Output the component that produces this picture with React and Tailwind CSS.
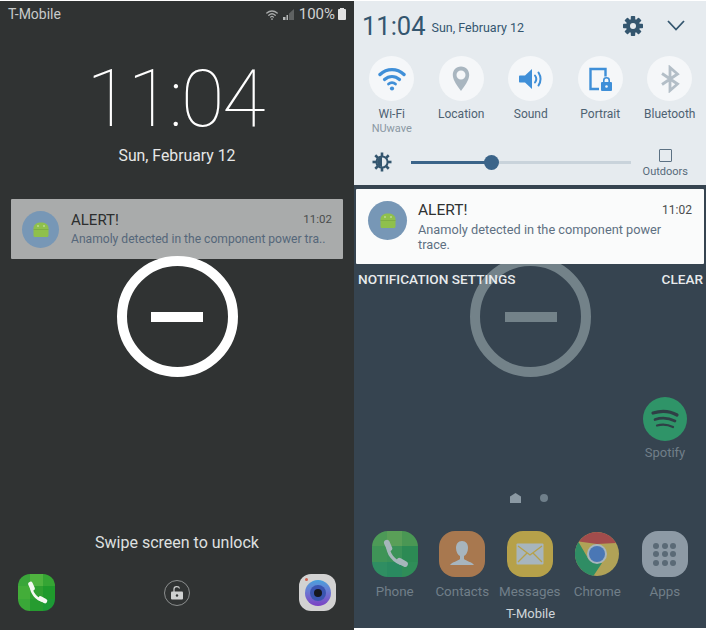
import React from 'react';

const WifiIcon = ({ size = 28, color = '#3f8fd8' }) => (
  <svg width={size} height={size} viewBox="0 0 28 28" fill="none">
    <path d="M2 9.5C9 3 19 3 26 9.5" stroke={color} strokeWidth="3.4" strokeLinecap="round" />
    <path d="M6.5 14.5C11 10.5 17 10.5 21.5 14.5" stroke={color} strokeWidth="3.2" strokeLinecap="round" />
    <path d="M10.5 19C12.5 17.2 15.5 17.2 17.5 19" stroke={color} strokeWidth="2.8" strokeLinecap="round" />
    <circle cx="14" cy="23.5" r="2.1" fill={color} />
  </svg>
);

const PinIcon = () => (
  <svg width="28" height="28" viewBox="0 0 28 28">
    <path fillRule="evenodd" d="M14 1.5C8.8 1.5 5.8 5.500 5.8 10c0 5.500 5.200 11.500 8.200 16 3-4.500 8.200-10.500 8.200-16 0-4.500-3-8.500-8.200-8.500zm0 4a4.500 4.500 0 1 1 0 9 4.500 4.500 0 0 1 0-9z" fill="#a9b6c0" />
  </svg>
);

const SoundIcon = () => (
  <svg width="28" height="28" viewBox="0 0 28 28" fill="none">
    <path d="M3 10.5H8L15 4V24L8 17.5H3C2.400 17.500 2 17 2 16.500V11.500C2 11 2.400 10.500 3 10.500Z" fill="#3f8fd8" />
    <path d="M18 10.5C19.500 12.500 19.500 15.500 18 17.500" stroke="#3f8fd8" strokeWidth="2" strokeLinecap="round" />
    <path d="M21.500 7.500C24 11.500 24 16.500 21.500 20.500" stroke="#3f8fd8" strokeWidth="2" strokeLinecap="round" />
  </svg>
);

const PortraitIcon = () => (
  <svg width="28" height="28" viewBox="0 0 28 28" fill="none">
    <path d="M13 24H4.500V4H19.500V11.500" stroke="#3f8fd8" strokeWidth="2.4" />
    <rect x="15" y="17" width="11" height="9" rx="1" fill="#3f8fd8" />
    <path d="M17.800 17V15.200C17.800 12 23.200 12 23.200 15.200V17" stroke="#3f8fd8" strokeWidth="1.6" />
    <circle cx="20.500" cy="21.500" r="1.300" fill="#f5f7f9" />
  </svg>
);

const BluetoothIcon = () => (
  <svg width="28" height="28" viewBox="0 0 28 28" fill="none" stroke="#b3bec7" strokeWidth="2.800">
    <path d="M6 8.500L21.500 19L14 25.500V2.500L21.500 9L6 19.500" />
  </svg>
);

const GearIcon = () => (
  <svg width="20" height="20" viewBox="0 0 20 20">
    {[0, 45, 90, 135].map((deg) => (
      <rect key={deg} x="7.8" y="0" width="4.4" height="20" rx="0.8" fill="#34566f" transform={`rotate(${deg} 10 10)`} />
    ))}
    <circle cx="10" cy="10" r="7" fill="#34566f" />
    <circle cx="10" cy="10" r="3" fill="#e6ebef" />
  </svg>
);

const BrightnessIcon = () => (
  <svg width="20" height="20" viewBox="0 0 20 20" fill="none">
    {[0, 45, 90, 135, 180, 225, 270, 315].map((deg) => (
      <path key={deg} d="M10 0.500V4.500" stroke="#34566f" strokeWidth="2.600" transform={`rotate(${deg} 10 10)`} />
    ))}
    <circle cx="10" cy="10" r="5.600" fill="#e6ebef" stroke="#34566f" strokeWidth="2" />
    <path d="M10 5A5 5 0 0 0 10 15Z" fill="#34566f" />
  </svg>
);

const AndroidAvatar = ({ className }) => (
  <div className={`rounded-full bg-[#7797b6] flex items-center justify-center shrink-0 ${className}`}>
    <svg width="16" height="15" viewBox="0 0 16 15">
      <path d="M0.500 6C0.500 2.500 4 0.500 8 0.500S15.500 2.500 15.500 6V13.500C15.500 14.300 14.800 15 14 15H2C1.200 15 0.500 14.300 0.500 13.500Z" fill="#8fc04c" />
      <rect x="0.500" y="7" width="15" height="1" fill="#7fae46" />
      <circle cx="5" cy="4" r="0.800" fill="#dce9c5" />
      <circle cx="11" cy="4" r="0.800" fill="#dce9c5" />
    </svg>
  </div>
);

const MinusRing = ({ ringClass, barClass }) => (
  <div className={`w-[121px] h-[121px] rounded-full border-[10px] flex items-center justify-center ${ringClass}`}>
    <div className={`w-[52px] h-[10px] ${barClass}`} />
  </div>
);

const QuickToggle = ({ label, sub, children }) => (
  <div className="w-[69.5px] flex flex-col items-center">
    <div className="w-[45px] h-[45px] rounded-full bg-[#f5f7f9] flex items-center justify-center">{children}</div>
    <span className="mt-[5px] text-[12px] leading-[16px] text-[#4e6272] whitespace-nowrap">{label}</span>
    {sub && <span className="text-[11px] leading-[14px] text-[#8a98a3]">{sub}</span>}
  </div>
);

const DockIcon = ({ label, children }) => (
  <div className="w-[67.5px] flex flex-col items-center">
    <div className="h-[46px] flex items-center justify-center">{children}</div>
    <span className="mt-[6px] text-[13.400px] leading-[18px] text-[#717f89] whitespace-nowrap">{label}</span>
  </div>
);

const PhoneGlyph = ({ color, size = 24 }) => (
  <svg width={size} height={size} viewBox="0 0 24 24" fill="none" stroke={color} strokeLinecap="round">
    <path d="M6.500 4.500C5.500 11 11 18.500 19 20" strokeWidth="2.600" />
    <path d="M5.500 3L7.500 7.500" strokeWidth="4.600" />
    <path d="M15.500 17.500L20 20" strokeWidth="4.600" />
  </svg>
);

const PhoneTile = ({ shades, glyph, box, glyphSize }) => (
  <div className={`${box} relative overflow-hidden grid grid-cols-3`}>
    {shades.map((shade, i) => (
      <div key={i} className="w-full h-full" style={{ backgroundColor: shade }} />
    ))}
    <div className="absolute inset-0 flex items-center justify-center">
      <PhoneGlyph color={glyph} size={glyphSize} />
    </div>
  </div>
);

const lockShades = ['#3aa63a', '#4fb33f', '#35a534', '#43ad39', '#2fa030', '#1f9a2c', '#3aa838', '#269c30', '#1c9a35'];
const dockShades = ['#4d9a57', '#5a9f58', '#4a9754', '#3f9457', '#3a9258', '#2c8a54', '#2f8e62', '#2a8a60', '#2f8d58'];

export default function App() {
  return (
    <div className="w-[708px] h-[630px] bg-white flex font-['Roboto',sans-serif] overflow-hidden">
      {/* Lock screen */}
      <div className="w-[354px] h-[630px] border-t border-white bg-[#303333] flex flex-col items-center relative">
        <div className="w-full h-[27px] shrink-0 flex items-center justify-between pl-[8px] pr-[8px] text-[#c8caca] text-[14px]">
          <span>T-Mobile</span>
          <div className="flex items-center">
            <WifiIcon size={12} color="#a8abab" />
            <svg className="ml-[4px]" width="12" height="11" viewBox="0 0 12 11">
              <path d="M1 11h2.500V8H1zM4.500 11H6V6H4.500z" fill="#b5b8b8" />
              <path d="M7 11V4.500L12 0v11z" fill="#5f6262" />
            </svg>
            <span className="ml-[5px] text-[15px] text-[#d0d2d2]">100%</span>
            <div className="ml-[3px] w-[8px] h-[11px] bg-[#e2e3e3] rounded-[1px] relative">
              <div className="absolute -top-[1px] left-[2px] w-[4px] h-[1px] bg-[#e2e3e3]" />
            </div>
          </div>
        </div>
        <div className="mt-[29px] -ml-[4px] text-[79px] leading-[84px] font-thin text-white tracking-[-2px]">11:04</div>
        <div className="mt-[4px] text-[15.800px] leading-[22px] text-[#e6e7e7]">Sun, February 12</div>
        <div className="mt-[32px] w-[332px] h-[60px] bg-[#a9abab] rounded-[1px] flex items-center pl-[11px] pr-[11px]">
          <AndroidAvatar className="w-[37px] h-[37px]" />
          <div className="ml-[12px] flex-1 min-w-0">
            <div className="flex items-center justify-between">
              <span className="text-[15px] leading-[20px] text-[#2c2e2e]">ALERT!</span>
              <span className="text-[11.500px] text-[#4a4d4d]">11:02</span>
            </div>
            <div className="text-[12.100px] leading-[18px] text-[#55677a] whitespace-nowrap">Anamoly detected in the component power tra..</div>
          </div>
        </div>
        <div className="-mt-[3px]">
          <MinusRing ringClass="border-white" barClass="bg-white" />
        </div>
        <div className="mt-[155px] text-[16px] leading-[22px] text-[#dfe0e0]">Swipe screen to unlock</div>
        <div className="mt-[20px] w-full pl-[18px] pr-[18px] flex items-center justify-between">
          <PhoneTile shades={lockShades} glyph="#f4f8f2" box="w-[37px] h-[37px] rounded-[12px]" glyphSize={24} />
          <div className="w-[26px] h-[26px] rounded-full border border-[#8b8e8e] flex items-center justify-center">
            <svg width="14" height="15" viewBox="0 0 14 15" fill="none">
              <path d="M4 7V4C4 1 9 1 9.500 3.500" stroke="#cfd1d1" strokeWidth="1.200" />
              <rect x="1" y="6.500" width="12" height="8" rx="1" fill="#cfd1d1" />
              <circle cx="7" cy="10.500" r="1.200" fill="#303333" />
            </svg>
          </div>
          <div className="w-[37px] h-[37px] rounded-[12px] bg-[#d2d2d2] flex items-center justify-center relative">
            <div className="absolute left-[6px] top-[4px] w-[3px] h-[3px] rounded-full bg-[#d0614f]" />
            <div className="w-[26px] h-[26px] rounded-full bg-linear-to-b from-[#46a0dc] to-[#7a3fc4] flex items-center justify-center">
              <div className="w-[16px] h-[16px] rounded-full bg-[#3a55b0] flex items-center justify-center">
                <div className="w-[8px] h-[8px] rounded-full bg-[#16181f]" />
              </div>
            </div>
          </div>
        </div>
      </div>

      {/* Notification shade */}
      <div className="w-[352px] h-[628px] bg-[#364450] flex flex-col relative">
        <div className="bg-[#e6ebef] h-[185px] shrink-0 border-t border-white">
          <div className="h-[49px] flex items-center pl-[8px] pr-[21px]">
            <span className="text-[25.500px] leading-[30px] text-[#34566f]">11:04</span>
            <span className="ml-[6px] mt-[6px] text-[12.500px] text-[#34566f]">Sun, February 12</span>
            <div className="ml-auto"><GearIcon /></div>
            <svg className="ml-[24px]" width="18" height="11" viewBox="0 0 18 11" fill="none">
              <path d="M1 1L9 9.500L17 1" stroke="#34566f" strokeWidth="1.800" />
            </svg>
          </div>
          <div className="flex pl-[3px] mt-[6px]">
            <QuickToggle label="Wi-Fi" sub="NUwave"><WifiIcon /></QuickToggle>
            <QuickToggle label="Location"><PinIcon /></QuickToggle>
            <QuickToggle label="Sound"><SoundIcon /></QuickToggle>
            <QuickToggle label="Portrait"><PortraitIcon /></QuickToggle>
            <QuickToggle label="Bluetooth"><BluetoothIcon /></QuickToggle>
          </div>
          <div className="flex items-start pl-[18px] pr-[18px] mt-[13px]">
            <div className="mt-[3px]"><BrightnessIcon /></div>
            <div className="ml-[19px] mt-[12px] w-[220px] h-[3px] bg-[#c9d3db] relative">
              <div className="h-full w-[81px] bg-[#3b6489]" />
              <div className="absolute left-[73px] -top-[6px] w-[15px] h-[15px] rounded-full bg-[#3b6489]" />
            </div>
            <div className="ml-auto flex flex-col items-center">
              <div className="w-[13px] h-[13px] border border-[#5c7183] rounded-[1px]" />
              <span className="mt-[3px] text-[11px] leading-[14px] text-[#566a7a]">Outdoors</span>
            </div>
          </div>
        </div>
        <div className="relative z-10 mx-[2px] mt-[4px] h-[75px] bg-[#fafbfb] rounded-[1px] flex pl-[12px] pr-[12px] items-start">
          <AndroidAvatar className="w-[39px] h-[39px] mt-[12px]" />
          <div className="ml-[11px] flex-1 mt-[11px]">
            <div className="flex items-center justify-between">
              <span className="text-[15.500px] leading-[20px] text-[#2f3232]">ALERT!</span>
              <span className="text-[12px] text-[#4a4d4d]">11:02</span>
            </div>
            <div className="text-[12.750px] leading-[15px] text-[#5e7082] mt-[2px] w-[262px]">Anamoly detected in the component power trace.</div>
          </div>
        </div>
        <div className="flex justify-between pl-[4px] pr-[3px] mt-[6px] text-[13.600px] leading-[18px] font-medium text-[#e8ebed] relative z-10">
          <span>NOTIFICATION SETTINGS</span>
          <span>CLEAR</span>
        </div>
        <div className="absolute left-[116px] top-[256px]">
          <MinusRing ringClass="border-[#738289]" barClass="bg-[#738289]" />
        </div>
        <div className="absolute right-[19px] top-[397px] w-[44px] flex flex-col items-center">
          <div className="w-[44px] h-[44px] rounded-full bg-[#2f9468] flex items-center justify-center">
            <svg width="30" height="24" viewBox="0 0 30 24" fill="none" stroke="#2f3f46" strokeLinecap="round">
              <path d="M3 6C11 3.500 20 4 27 8" strokeWidth="3.200" />
              <path d="M5 12.500C11 10.500 19 11 25 14" strokeWidth="2.700" />
              <path d="M7 18.500C12 17 18 17.500 23 20" strokeWidth="2.200" />
            </svg>
          </div>
          <span className="mt-[3px] text-[13px] leading-[18px] text-[#717f89]">Spotify</span>
        </div>
        <div className="absolute left-[156px] top-[493px] flex items-center gap-[19px]">
          <div className="w-[11px] h-[10px] bg-[#8b99a3] [clip-path:polygon(50%_0,100%_35%,100%_100%,0_100%,0_35%)]" />
          <div className="w-[8px] h-[8px] rounded-full bg-[#6f7f8a]" />
        </div>
        <div className="absolute left-[7px] top-[531px] flex">
          <DockIcon label="Phone">
            <PhoneTile shades={dockShades} glyph="#a6b6bb" box="w-[46px] h-[46px] rounded-[16px]" glyphSize={30} />
          </DockIcon>
          <DockIcon label="Contacts">
            <div className="w-[46px] h-[46px] rounded-[16px] bg-[#a8784f] flex items-center justify-center">
              <svg width="26" height="28" viewBox="0 0 26 28"><path d="M13 1c4 0 6 3 6 7s-2 7-4 8v3c2 2 8 3 10 6H1c2-3 8-4 10-6v-3c-2-1-4-4-4-8s2-7 6-7z" fill="#a7b5be" /></svg>
            </div>
          </DockIcon>
          <DockIcon label="Messages">
            <div className="w-[46px] h-[46px] rounded-[16px] bg-[#b6a14a] flex items-center justify-center">
              <svg width="28" height="22" viewBox="0 0 28 22" fill="none">
                <rect width="27" height="21" x="0.500" y="0.500" rx="1" fill="#a7b5be" />
                <path d="M2 3l12 9 12-9M2 19l9-9M26 19l-9-9" stroke="#b6a14a" strokeWidth="1.300" />
              </svg>
            </div>
          </DockIcon>
          <DockIcon label="Chrome">
            <svg width="44" height="44" viewBox="0 0 44 44">
              <circle cx="22" cy="22" r="22" fill="#b0a257" />
              <path d="M22 12L4 9.500A22 22 0 0 1 41 11Z" fill="#a24c4c" />
              <path d="M14 28L3.500 10A22 22 0 0 0 18.500 43.700L27 31Z" fill="#2f8d64" />
              <circle cx="22" cy="22" r="10" fill="#a7b5be" />
              <circle cx="22" cy="22" r="8" fill="#4a77b5" />
            </svg>
          </DockIcon>
          <DockIcon label="Apps">
            <div className="w-[46px] h-[46px] rounded-[16px] bg-[#8d9aa5] grid grid-cols-3 gap-[2.700px] p-[11.500px] place-items-center">
              {Array.from({ length: 9 }).map((_, i) => (
                <div key={i} className="w-[6px] h-[6px] rounded-full bg-[#5a6a76]" />
              ))}
            </div>
          </DockIcon>
        </div>
        <span className="absolute left-[152px] top-[605px] text-[13px] leading-[18px] text-[#d0d6da]">T-Mobile</span>
      </div>
    </div>
  );
}
